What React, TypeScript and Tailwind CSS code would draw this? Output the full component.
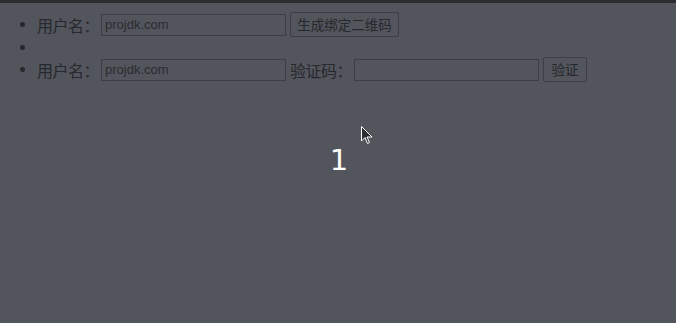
import React from "react";

function Bullet() {
  return <span className="w-[5px] h-[5px] rounded-full bg-[#26282d] shrink-0" />;
}

export default function App() {
  const cjk = { fontFamily: '"Noto Sans CJK SC", "Liberation Sans", sans-serif' };
  return (
    <div className="w-[676px] h-[323px] bg-[#52555c] flex flex-col overflow-hidden relative" style={cjk}>
      <div className="h-[3px] bg-[#2b2d31] shrink-0" />
      <div className="flex flex-col pt-[9px] text-[#26282d]">
        <div className="flex items-center h-[25px]">
          <div className="w-[37px] flex justify-end pr-[12px]"><Bullet /></div>
          <span className="text-[16px] leading-none w-[64px] tracking-[-0.5px]">用户名：</span>
          <div className="w-[185px] h-[22px] border border-[#3c3e43] flex items-center px-[3px] text-[13px] text-[#2a2c31]" style={{ fontFamily: '"Liberation Sans", Arial, sans-serif' }}>projdk.com</div>
          <div className="ml-[4px] w-[109px] h-[25px] border border-[#3c3e43] rounded-[2px] flex items-center justify-center text-[13.5px] text-[#26282d]">生成绑定二维码</div>
        </div>
        <div className="flex items-center h-[20px]">
          <div className="w-[37px] flex justify-end pr-[12px]"><Bullet /></div>
        </div>
        <div className="flex items-center h-[25px]">
          <div className="w-[37px] flex justify-end pr-[12px]"><Bullet /></div>
          <span className="text-[16px] leading-none w-[64px] tracking-[-0.5px]">用户名：</span>
          <div className="w-[185px] h-[22px] border border-[#3c3e43] flex items-center px-[3px] text-[13px] text-[#2a2c31]" style={{ fontFamily: '"Liberation Sans", Arial, sans-serif' }}>projdk.com</div>
          <span className="ml-[4px] text-[16px] leading-none w-[64px] tracking-[-0.5px]">验证码：</span>
          <div className="w-[185px] h-[22px] border border-[#3c3e43]" />
          <div className="ml-[4px] w-[44px] h-[25px] border border-[#3c3e43] rounded-[2px] flex items-center justify-center text-[13.5px] text-[#26282d]">验证</div>
        </div>
      </div>
      <div className="flex justify-center mt-[64px]">
        <span className="text-white text-[29px] font-medium leading-none ml-[2px]" style={{ fontFamily: '"DejaVu Sans", sans-serif' }}>1</span>
      </div>
      <svg className="absolute left-[361px] top-[126px]" width="13" height="19" viewBox="0 0 13 19">
        <path d="M0.5 0.5 L0.5 15 L4 11.5 L6.5 17.5 L8.5 16.5 L6 11 L11 11 Z" fill="#2b2d31" stroke="#ffffff" strokeWidth="1" strokeLinejoin="round" />
      </svg>
    </div>
  );
}
